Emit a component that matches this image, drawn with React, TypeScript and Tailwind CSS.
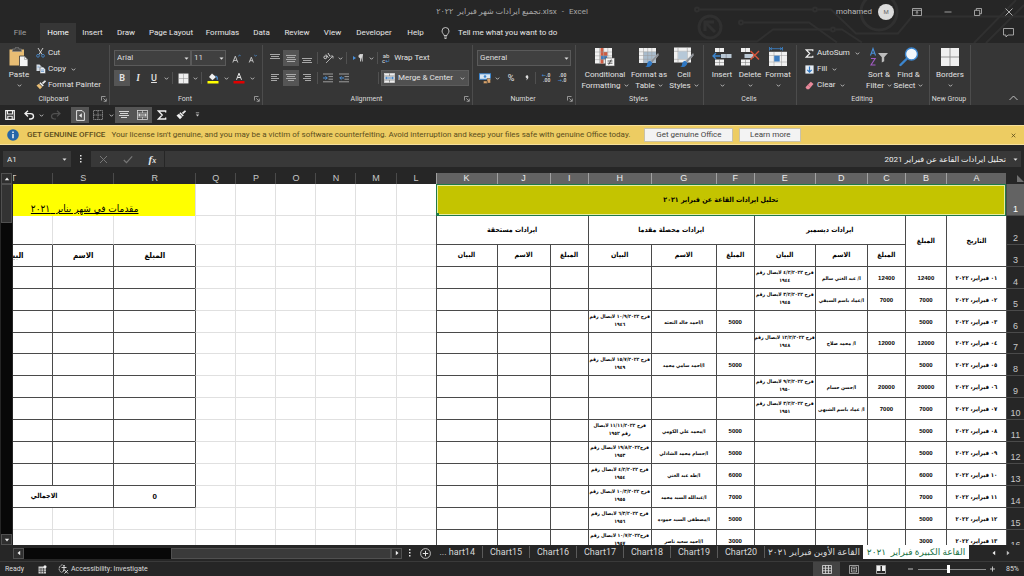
import React from "react";

type Kids = { children?: React.ReactNode };

const Ic = ({ w = 12, h = 12, vb, children }: Kids & { w?: number; h?: number; vb?: string }) => (
  <svg width={w} height={h} viewBox={vb ?? `0 0 ${w} ${h}`} fill="none" className="shrink-0" aria-hidden="true">
    {children}
  </svg>
);

const Chev = () => (
  <Ic w={5} h={5}>
    <path d="M0.8 1.6 2.5 3.3 4.2 1.6" stroke="#c8c8c8" strokeWidth="0.9" />
  </Ic>
);

const Tri = () => (
  <Ic w={5} h={5}>
    <path d="M0.5 1.4h4L2.5 3.8z" fill="#e0e0e0" />
  </Ic>
);

const Launcher = () => (
  <Ic w={6} h={6}>
    <path d="M0.5 4.5v-4h4M2.3 2.3l2.8 2.8M5.3 2.6v2.7H2.6" stroke="#bdbdbd" strokeWidth="0.7" />
  </Ic>
);

function Group({ label, className, launcher, children }: Kids & { label: string; className: string; launcher?: boolean }) {
  return (
    <section aria-label={label} className={`flex shrink-0 flex-col border-r border-[#4c4c4c] ${className}`}>
      <div className="flex h-12 items-start">{children}</div>
      <div className="flex h-3 items-center justify-center pr-[2px]">
        <span className="flex-1" />
        <span className="text-[7px] text-[#dcdcdc]">{label}</span>
        <span className="flex flex-1 justify-end">
          {launcher && (
            <button aria-label={`${label} settings`}>
              <Launcher />
            </button>
          )}
        </span>
      </div>
    </section>
  );
}

function Big({ icon, lines, className }: { icon: React.ReactNode; lines: string[]; className: string }) {
  return (
    <button className={`flex shrink-0 flex-col items-center text-[8px] leading-[11px] whitespace-nowrap ${className}`}>
      <span className="flex h-6 items-center">{icon}</span>
      <span>{lines[0]}</span>
      <span className="flex h-[11px] items-center gap-[3px]">
        {lines[1]}
        <Chev />
      </span>
    </button>
  );
}

function Small({ icon, label, chev }: { icon: React.ReactNode; label: string; chev?: boolean }) {
  return (
    <button className="flex h-4 items-center gap-[3px] text-[8px] whitespace-nowrap">
      <span className="flex w-[9px] justify-center">{icon}</span>
      {label}
      {chev && (
        <span className="pl-[2px]">
          <Chev />
        </span>
      )}
    </button>
  );
}

function Tool({ label, className = "w-4", on, children }: Kids & { label: string; className?: string; on?: boolean }) {
  return (
    <button
      aria-label={label}
      className={`flex h-4 shrink-0 items-center justify-center ${on ? "bg-[#555555]" : ""} ${className}`}
    >
      {children}
    </button>
  );
}

const Bar = () => <span className="mx-[2px] h-3 w-px shrink-0 bg-[#505050]" />;

function Combo({ label, value, className }: { label: string; value: string; className: string }) {
  return (
    <span className={`relative flex h-4 items-center ${className}`}>
      <select
        aria-label={label}
        defaultValue={value}
        className="h-full w-full appearance-none border border-[#5a5a5a] bg-[#404040] pl-[2px] text-[8px] text-[#dedede]"
      >
        <option>{value}</option>
      </select>
      <span className="pointer-events-none absolute right-[2px]">
        <Tri />
      </span>
    </span>
  );
}

const Lines = ({ rows, color = "#b5b5b5" }: { rows: [number, number, number][]; color?: string }) => (
  <Ic w={10} h={10}>
    {rows.map(([x, y, w]) => (
      <rect key={y} x={x} y={y} width={w} height="0.9" fill={color} />
    ))}
  </Ic>
);

const Brush = () => (
  <>
    <path d="M20 6.5 12.5 14l1.8 1.8 6.2-7.6z" fill="#8a8f96" stroke="#c9ccd0" strokeWidth="0.4" />
    <path d="M12.2 13.8c-2.4.2-3 2.2-3.2 4-.1 1-.9 1.6-1.8 1.7 3 1.2 6.700.4 7.200-3.700z" fill="#2f78c4" />
  </>
);

const PasteIcon = () => (
  <Ic w={20} h={20}>
    <rect x="0.5" y="2.500" width="14.500" height="16" fill="#e8bd74" />
    <path d="M3.500 4.500v-2.500h2.500a2 2 0 0 1 4 0h2.500v2.500z" fill="#4a4a4a" stroke="#8d8d8d" strokeWidth="0.6" />
    <path d="M10.500 9h5l3.500 3.500v7h-8.500z" fill="#f4f4f4" stroke="#363636" strokeWidth="0.8" />
    <path d="M15.500 9v3.500h3.500" stroke="#8f8f8f" strokeWidth="0.6" />
  </Ic>
);

const CondIcon = () => (
  <Ic w={22} h={20}>
    <rect x="1" y="1" width="17" height="15.500" fill="#f0f0f0" />
    <rect x="6.500" y="1" width="3" height="15.500" fill="#cf5b41" />
    <rect x="9.500" y="5" width="4" height="4" fill="#cf5b41" />
    <rect x="7" y="8.800" width="6" height="3.500" fill="#3f7dc0" />
    <path d="M1 5h17M1 8.800h17M1 12.600h17M5.500 1v15.500M9.700 1v15.500M13.800 1v15.500" stroke="#9a9a9a" strokeWidth="0.5" />
    <rect x="11.500" y="11" width="9" height="8" fill="#f7f7f7" stroke="#555" strokeWidth="0.6" />
    <path d="M13.500 14h5M13.500 16.200h5M17.300 12.500l-2.600 5.200" stroke="#333" strokeWidth="0.8" />
  </Ic>
);

const TableIcon = () => (
  <Ic w={22} h={20}>
    <rect x="1" y="1" width="17" height="15" fill="#f0f0f0" />
    <rect x="5.500" y="4.800" width="12.500" height="11.200" fill="#a9bccd" />
    <path d="M1 4.800h17M1 8.500h17M1 12.300h17M5.500 1v15M9.700 1v15M13.800 1v15" stroke="#9a9a9a" strokeWidth="0.5" />
    <Brush />
  </Ic>
);

const StylesIcon = () => (
  <Ic w={22} h={20}>
    <rect x="1" y="0.500" width="17" height="15" fill="#f0f0f0" />
    <path d="M1 4.300h17M1 12.300h17M5 .5v15M14.300 .5v15" stroke="#8d8d8d" strokeWidth="0.5" />
    <rect x="5.200" y="4.500" width="9" height="7.500" fill="#b6c8d8" />
    <Brush />
  </Ic>
);

const InsertIcon = () => (
  <Ic w={20} h={20}>
    <path d="M3 1h9v4H3zM3 12.500h9v6H3z" fill="#f0f0f0" />
    <path d="M7.500 1v4M7.500 12.500v6M3 15.500h9" stroke="#777" strokeWidth="0.5" />
    <rect x="9" y="7" width="10.500" height="4" fill="#b9c7d3" />
    <path d="M14.200 7v4" stroke="#667" strokeWidth="0.5" />
    <path d="M8.500 9h-7.500M4 6 1 9l3 3" stroke="#3c86cf" strokeWidth="1.300" />
  </Ic>
);

const DeleteIcon = () => (
  <Ic w={20} h={20}>
    <path d="M1 1h9v4H1zM1 12.500h9v6H1z" fill="#f0f0f0" />
    <path d="M5.500 1v4M5.500 12.500v6M1 15.500h9" stroke="#777" strokeWidth="0.5" />
    <rect x="4.500" y="7" width="9" height="4" fill="#b9c7d3" />
    <path d="m10.500 4 8.500 8.500M19 4l-8.500 8.500" stroke="#d9543a" strokeWidth="1.400" />
  </Ic>
);

const FormatIcon = () => (
  <Ic w={20} h={20}>
    <path d="M1.500 0v3.500M14.500 0v3.500M2 1.700h12M4 .5 2.300 1.700 4 3M12 .5l1.700 1.200L12 3" stroke="#3c86cf" strokeWidth="0.8" />
    <rect x="1" y="4.800" width="18" height="14.200" fill="#f0f0f0" />
    <path d="M1 8.500h18M1 15h18M6 4.800v14.200M13.500 4.800v14.200" stroke="#999" strokeWidth="0.5" />
    <rect x="6.200" y="8.700" width="5.500" height="5.800" fill="#3c7dc2" />
  </Ic>
);

const SortIcon = () => (
  <Ic w={20} h={20}>
    <path d="M1.500 8.500 4 1.500l2.500 7M2.400 6.200h3.300" stroke="#4a90d9" strokeWidth="1.100" />
    <path d="M2 11.500h4.200l-4.200 6.500h4.500" stroke="#a25bc4" strokeWidth="1.100" />
    <path d="M9 6h10l-3.800 4.200v4l-2.400 1.300v-5.300z" fill="#bdbdbd" />
  </Ic>
);

const FindIcon = () => (
  <Ic w={20} h={20}>
    <path d="m7.500 12-6 6" stroke="#3c86cf" strokeWidth="2.400" strokeLinecap="round" />
    <circle cx="12.500" cy="7" r="6" fill="#f2f6fa" stroke="#3c86cf" strokeWidth="1.400" />
  </Ic>
);

const BordersIcon = ({ s = 20 }: { s?: number }) => (
  <Ic w={s} h={s} vb="0 0 20 20">
    <rect x="1" y="1" width="18" height="18" fill="#efefef" />
    <path d="M10 1v18M1 10h18" stroke="#8a8a8a" strokeWidth="0.9" />
  </Ic>
);

const BrushSmall = ({ gold }: { gold?: boolean }) => (
  <Ic w={10} h={10}>
    <path d="M9.500.8 6.500 3.500" stroke="#e8e8e8" strokeWidth="1.700" />
    <path d="m4.500 2.200 3.300 3.300-1.200 1-3.300-3.200z" fill="#f0f0f0" />
    <path d="M3 3.800 6.200 7 4 9.300.5 5.500z" fill={gold ? "#e8bd74" : "#f0f0f0"} />
  </Ic>
);

const Sigma = ({ s = 9 }: { s?: number }) => (
  <Ic w={s} h={s} vb="0 0 9 9">
    <path d="M7.800 2.200V.9H1.300L4.700 4.500 1.300 8.100h6.500V6.800" stroke="#f0f0f0" strokeWidth="1.200" />
  </Ic>
);

const Indent = ({ flip }: { flip?: boolean }) => (
  <Ic w={10} h={10}>
    <path d="M0 1h10M5.500 3.600H10M5.500 6.200H10M0 8.800h10" stroke="#a9a9a9" strokeWidth="0.9" />
    <path d={flip ? "M5 5H.8M2.500 3.300.8 5l1.700 1.700" : "M0 5h4.200M2.500 3.300 4.200 5 2.500 6.700"} stroke="#4a90d9" strokeWidth="1" />
  </Ic>
);

const MergeIcon = ({ mono }: { mono?: boolean }) => (
  <Ic w={11} h={10}>
    <rect x="0.500" y="0.500" width="10" height="9" fill={mono ? "#4f4f4f" : "#ececec"} stroke="#d5d5d5" strokeWidth="0.8" />
    <path d="M.5 3h10M.5 7h10M5.500.5V3M5.500 7v2.500" stroke={mono ? "#d5d5d5" : "#777"} strokeWidth="0.7" />
    <path d="M1.500 5h8M3 3.900 1.700 5 3 6.100M8 3.900 9.300 5 8 6.100" stroke={mono ? "#f0f0f0" : "#2f78c4"} strokeWidth="0.9" />
  </Ic>
);

function DecIcon({ out }: { out?: boolean }) {
  return (
    <span className="flex flex-col items-end text-[5px] leading-[5px] font-bold text-[#cfcfcf]">
      <span>
        {!out && <span className="text-[#4a90d9]">←</span>}
        {out ? ".00" : ".0"}
      </span>
      <span>
        {out && <span className="text-[#4a90d9]">→</span>}
        {out ? ".0" : ".00"}
      </span>
    </span>
  );
}

function TitleBar() {
  return (
    <header className="flex h-[23px] shrink-0 items-center">
      <div className="flex flex-1" />
      <h1 className="flex gap-[5px] text-[8px] whitespace-pre text-[#a8a8a8]">
        <bdi dir="ltr">تجميع ايرادات شهر فبراير  ٢٠٢٢.xlsx</bdi>
        <span>-</span>
        <span>Excel</span>
      </h1>
      <div className="flex flex-1 items-center justify-end">
        <span className="text-[8px] text-[#b8b8b8]">mohamed</span>
        <span className="mr-2 ml-[6px] flex size-4 items-center justify-center rounded-full bg-[#dcdcdc] text-[6px] text-[#666]">M</span>
        <button aria-label="Ribbon display options" className="flex w-[30px] justify-center">
          <Ic w={10} h={8}>
            <path d="M.5.5h9v7h-9zM.5 2.300h9M5 6.500V3.500M3.700 4.700 5 3.500l1.300 1.200" stroke="#bdbdbd" strokeWidth="0.8" />
          </Ic>
        </button>
        <button aria-label="Minimize" className="flex w-[31px] justify-center">
          <Ic w={8} h={8}>
            <path d="M.5 4h7" stroke="#bdbdbd" strokeWidth="0.8" />
          </Ic>
        </button>
        <button aria-label="Restore" className="flex w-[30px] justify-center">
          <Ic w={8} h={8}>
            <path d="M.5 2.300h5.200v5.200H.5zM2.300 2.300V.5h5.200v5.200H5.700" stroke="#bdbdbd" strokeWidth="0.8" />
          </Ic>
        </button>
        <button aria-label="Close" className="flex w-[31px] justify-center">
          <Ic w={8} h={8}>
            <path d="m.5.5 7 7M7.500.5l-7 7" stroke="#d0d0d0" strokeWidth="0.8" />
          </Ic>
        </button>
      </div>
    </header>
  );
}

const MENU: [string, string][] = [
  ["File", "w-[40px]"],
  ["Home", "w-[36px]"],
  ["Insert", "w-[33px]"],
  ["Draw", "w-[34px]"],
  ["Page Layout", "w-[56px]"],
  ["Formulas", "w-[47px]"],
  ["Data", "w-[31px]"],
  ["Review", "w-[40px]"],
  ["View", "w-[31px]"],
  ["Developer", "w-[52px]"],
  ["Help", "w-[31px]"],
];

function MenuTabs() {
  return (
    <nav className="flex h-5 shrink-0 items-stretch text-[8px]">
      {MENU.map(([name, w]) => (
        <button
          key={name}
          className={`${w} ${name === "Home" ? "bg-[#363636] text-white" : name === "File" ? "text-[#a0a0a0]" : "text-[#e6e6e6]"}`}
        >
          {name}
        </button>
      ))}
      <button className="ml-[10px] flex items-center gap-2 text-[#e6e6e6]">
        <Ic w={9} h={12}>
          <path d="M3 8.500C3 7 1 6.300 1 4a3.500 3.500 0 0 1 7 0c0 2.300-2 3-2 4.500zM3 10h3M3.500 11.500h2" stroke="#e6e6e6" strokeWidth="0.8" />
        </Ic>
        Tell me what you want to do
      </button>
      <span className="flex-1" />
      <button aria-label="Comments" className="mr-[10px]">
        <Ic w={11} h={10}>
          <path d="M.5.5h10v6.500H5L3 9V7H.5z" stroke="#c0c0c0" strokeWidth="0.8" />
        </Ic>
      </button>
    </nav>
  );
}

function Ribbon() {
  return (
    <div className="flex h-[62px] shrink-0 bg-[#363636] pt-[2px] text-[#e2e2e2]">
      <Group label="Clipboard" launcher className="w-[110px]">
        <Big className="ml-1 w-[30px]" icon={<PasteIcon />} lines={["Paste", ""]} />
        <div className="ml-[2px] flex flex-col">
          <Small
            label="Cut"
            icon={
              <Ic w={9} h={10}>
                <path d="m2 0 4 6.500M7 0 3 6.500" stroke="#e0e0e0" strokeWidth="0.9" />
                <circle cx="2" cy="7.800" r="1.400" stroke="#4a90d9" strokeWidth="0.8" />
                <circle cx="7" cy="7.800" r="1.400" stroke="#4a90d9" strokeWidth="0.8" />
              </Ic>
            }
          />
          <Small
            label="Copy"
            chev
            icon={
              <Ic w={10} h={10}>
                <path d="M.5.5h3l2 2v4.500h-5z" fill="#d5dde5" />
                <path d="M4 3h3.200l2.300 2.300V9.500H4z" fill="#e6ecf2" stroke="#363636" strokeWidth="0.500" />
                <path d="M5 6h3M5 7.500h3M1.500 3h2" stroke="#3c7dc2" strokeWidth="0.600" />
              </Ic>
            }
          />
          <Small label="Format Painter" icon={<BrushSmall gold />} />
        </div>
      </Group>

      <Group label="Font" launcher className="w-[153px]">
        <div className="flex flex-col gap-1 pt-[5px] pl-1">
          <div className="flex items-center">
            <Combo label="Font name" value="Arial" className="w-[77px]" />
            <Combo label="Font size" value="11" className="w-[35px]" />
            <Tool label="Increase font size" className="ml-[2px] w-4">
              <Ic w={9} h={9}>
                <path d="M.8 8.500 3.300 2.200l2.500 6.300M1.700 6.400h3.200" stroke="#d0d0d0" strokeWidth="0.900" />
                <path d="M6.300 2.200 7.500 1l1.200 1.200" stroke="#4a90d9" strokeWidth="0.800" />
              </Ic>
            </Tool>
            <Tool label="Decrease font size">
              <Ic w={9} h={9}>
                <path d="M1.200 8.500 3.300 3.200l2.100 5.300M2 6.700h2.600" stroke="#d0d0d0" strokeWidth="0.900" />
                <path d="M6.300 1 7.500 2.200 8.700 1" stroke="#4a90d9" strokeWidth="0.800" />
              </Ic>
            </Tool>
          </div>
          <div className="flex items-center text-[9px]">
            <Tool label="Bold" on>
              <b>B</b>
            </Tool>
            <Tool label="Italic">
              <i className="font-serif font-bold">I</i>
            </Tool>
            <Tool label="Underline">
              <u className="font-medium">U</u>
            </Tool>
            <Tool label="Underline options" className="w-2">
              <Chev />
            </Tool>
            <Bar />
            <Tool label="Borders">
              <BordersIcon s={11} />
            </Tool>
            <Tool label="Border options" className="w-2">
              <Chev />
            </Tool>
            <Bar />
            <Tool label="Fill color" className="w-[18px]">
              <Ic w={12} h={12}>
                <path d="m5 1.500 4 3.500-3.500 3.300-3.500-3.300z" fill="#f0f0f0" />
                <path d="M8.500 4.200c1.500.3 2 1.800 1.800 3.500" stroke="#4a90d9" strokeWidth="1.200" />
                <rect x="0.500" y="9" width="11" height="2.500" fill="#ffff00" />
              </Ic>
            </Tool>
            <Tool label="Fill options" className="w-2">
              <Chev />
            </Tool>
            <Tool label="Font color" className="w-[18px]">
              <Ic w={12} h={12}>
                <path d="M3.500 7.800 6 1.200l2.500 6.600M4.400 5.500h3.200" stroke="#e6e6e6" strokeWidth="1" />
                <rect x="0.500" y="9" width="11" height="2.500" fill="#e00000" />
              </Ic>
            </Tool>
            <Tool label="Font color options" className="w-2">
              <Chev />
            </Tool>
          </div>
        </div>
      </Group>

      <Group label="Alignment" launcher className="w-[210px]">
        <div className="flex flex-col gap-1 pt-[5px] pl-1">
          <div className="flex items-center">
            <Tool label="Top align">
              <Lines rows={[[0, 1, 10], [1, 3, 8], [0, 5, 10]]} />
            </Tool>
            <Tool label="Middle align" on>
              <Lines rows={[[0, 2, 10], [1, 4, 8], [0, 6, 10], [1, 8, 8]]} />
            </Tool>
            <Tool label="Bottom align">
              <Lines rows={[[0, 5, 10], [1, 7, 8], [0, 9, 10]]} />
            </Tool>
            <Bar />
            <Tool label="Orientation">
              <Ic w={11} h={11}>
                <path d="M3 10 10 3M10 5.500V3H7.500" stroke="#bdbdbd" strokeWidth="0.900" />
                <circle cx="2.300" cy="4.300" r="1.400" stroke="#e0e0e0" strokeWidth="0.900" />
                <path d="m3 1.500 2.500 3.200M5 0l2 3.500" stroke="#e0e0e0" strokeWidth="0.900" />
              </Ic>
            </Tool>
            <Tool label="Orientation options" className="w-2">
              <Chev />
            </Tool>
            <Bar />
            <Tool label="Text direction" className="w-[18px]">
              <Ic w={12} h={10}>
                <path d="m1 3 3 2-3 2z" fill="#4a90d9" />
                <path d="M8.500 8.500V1.500H11M10.300 8.500V1.500M8.500 1.500a1.700 1.700 0 0 0 0 3.400z" stroke="#d5d5d5" strokeWidth="0.800" fill="#d5d5d5" />
              </Ic>
            </Tool>
            <Tool label="Text direction options" className="w-2">
              <Chev />
            </Tool>
            <Bar />
            <button className="flex h-4 items-center gap-1 pl-[2px] text-[8px]">
              <span className="text-[6px] leading-[5px] text-[#e0e0e0]">
                ab
                <br />c<span className="text-[#4a90d9]">↵</span>
              </span>
              Wrap Text
            </button>
          </div>
          <div className="flex items-center">
            <Tool label="Align left">
              <Lines rows={[[1, 1, 8], [1, 3, 6], [1, 5, 8], [1, 7, 6]]} />
            </Tool>
            <Tool label="Center" on>
              <Lines rows={[[0, 1, 10], [1, 3, 8], [0, 5, 10], [2, 7, 6]]} />
            </Tool>
            <Tool label="Align right">
              <Lines rows={[[1, 1, 8], [3, 3, 6], [1, 5, 8], [3, 7, 6]]} />
            </Tool>
            <Bar />
            <Tool label="Increase indent">
              <Indent />
            </Tool>
            <Tool label="Decrease indent">
              <Indent flip />
            </Tool>
            <span className="w-6 shrink-0" />
            <Bar />
            <button className="flex h-4 w-[88px] items-center gap-[3px] border border-[#5c5c5c] bg-[#505050] pl-[2px] text-[8px] whitespace-nowrap">
              <MergeIcon />
              <span className="flex-1 text-left">Merge &amp; Center</span>
              <span className="pr-[3px]">
                <Chev />
              </span>
            </button>
          </div>
        </div>
      </Group>

      <Group label="Number" launcher className="w-[103px]">
        <div className="flex flex-1 flex-col gap-1 px-1 pt-[5px]">
          <Combo label="Number format" value="General" className="w-full" />
          <div className="flex items-center">
            <Tool label="Accounting format">
              <Ic w={12} h={11}>
                <rect x="0.500" y="0.800" width="11" height="5.500" fill="#d9e6f2" stroke="#3c86cf" />
                <circle cx="6" cy="3.500" r="1.300" fill="#3c86cf" />
                <path d="M4.500 8h4v2.500h-4zM8 5.500h3.500V10H8z" fill="#d8a26a" stroke="#363636" strokeWidth="0.400" />
              </Ic>
            </Tool>
            <Tool label="Accounting options" className="w-2">
              <Chev />
            </Tool>
            <Tool label="Percent" className="w-5">
              <span className="text-[9px]">%</span>
            </Tool>
            <Tool label="Comma" className="w-3">
              <Ic w={4} h={6}>
                <path d="M2.800.5c1.200 1.500.6 3.500-1.800 5 .7-1 .9-1.700.8-2.300C.4 3 .2.8 1.500.4c.500-.1 1-.1 1.300.1z" fill="#e0e0e0" />
              </Ic>
            </Tool>
            <Bar />
            <Tool label="Increase decimal">
              <DecIcon />
            </Tool>
            <Tool label="Decrease decimal">
              <DecIcon out />
            </Tool>
          </div>
        </div>
      </Group>

      <Group label="Styles" className="w-[128px]">
        <Big className="ml-[5px] w-[48px]" icon={<CondIcon />} lines={["Conditional", "Formatting"]} />
        <Big className="w-[40px]" icon={<TableIcon />} lines={["Format as", "Table"]} />
        <Big className="w-[30px]" icon={<StylesIcon />} lines={["Cell", "Styles"]} />
      </Group>

      <Group label="Cells" className="w-[93px]">
        <Big className="ml-1 w-[28px]" icon={<InsertIcon />} lines={["Insert", ""]} />
        <Big className="w-[28px]" icon={<DeleteIcon />} lines={["Delete", ""]} />
        <Big className="w-[28px]" icon={<FormatIcon />} lines={["Format", ""]} />
      </Group>

      <Group label="Editing" className="w-[133px]">
        <div className="ml-2 flex w-[60px] flex-col">
          <Small label="AutoSum" chev icon={<Sigma />} />
          <Small
            label="Fill"
            chev
            icon={
              <Ic w={9} h={9}>
                <rect x="0.400" y="0.400" width="8.200" height="8.200" fill="#e6edf4" />
                <path d="M4.500 1.500v5.500M2.300 4.900 4.500 7.200l2.200-2.300" stroke="#2f78c4" strokeWidth="1.200" />
              </Ic>
            }
          />
          <Small
            label="Clear"
            chev
            icon={
              <Ic w={9} h={9}>
                <path d="M5.800.8 8.500 3 4 8.200H1.800L.5 6.300z" fill="#e88a9c" />
                <path d="m2.800 3.800 2.900 2.600" stroke="#b85568" strokeWidth="0.600" />
              </Ic>
            }
          />
        </div>
        <Big className="w-[28px]" icon={<SortIcon />} lines={["Sort &", "Filter"]} />
        <Big className="w-[31px]" icon={<FindIcon />} lines={["Find &", "Select"]} />
      </Group>

      <Group label="New Group" className="w-[41px]">
        <Big className="w-[40px]" icon={<BordersIcon />} lines={["Borders", ""]} />
      </Group>

      <div className="flex flex-1 items-end justify-end pr-[6px] pb-1">
        <button aria-label="Collapse ribbon">
          <Ic w={9} h={6}>
            <path d="M.5 5 4.500 1l4 4" stroke="#d0d0d0" strokeWidth="0.900" />
          </Ic>
        </button>
      </div>
    </div>
  );
}

function QuickAccess() {
  return (
    <div className="flex h-5 shrink-0 items-center pl-[2px]">
      <Tool label="Save">
        <Ic w={10} h={10}>
          <path d="M.7.700h8.600v8.600H.7z" stroke="#f0f0f0" strokeWidth="1.200" />
          <path d="M2.500 1v3h5V1M2.800 9.300V6.300h4.400v3" stroke="#f0f0f0" strokeWidth="1.100" />
        </Ic>
      </Tool>
      <Tool label="Undo" className="ml-[3px] w-4">
        <Ic w={11} h={10}>
          <path d="M4 .8 1 3.600l3 2.800M1.200 3.600h5.300a3 2.700 0 0 1 0 5.400H5" stroke="#f0f0f0" strokeWidth="1.400" />
        </Ic>
      </Tool>
      <Tool label="Undo options" className="w-2">
        <Chev />
      </Tool>
      <Tool label="Redo" className="w-5">
        <Ic w={11} h={10}>
          <path d="M7 .8l3 2.800-3 2.800M9.800 3.600H4.500a3 2.700 0 0 0 0 5.400H6" stroke="#505050" strokeWidth="1.200" />
        </Ic>
      </Tool>
      <Tool label="Sheet right to left" on className="ml-[6px] w-[18px]">
        <Ic w={9} h={11}>
          <path d="M.6.600h5.500l2.300 2.300v7.500H.6z" stroke="#f0f0f0" strokeWidth="0.900" />
          <path d="M5.800 3.200v4.600L3 5.500z" fill="#f0f0f0" />
        </Ic>
      </Tool>
      <Tool label="Borders" className="w-[18px]">
        <Ic w={10} h={10}>
          <path d="M.5.500h9v9h-9zM5 .5v9M.5 5h9" stroke="#a0a0a0" strokeWidth="0.800" strokeDasharray="1.400 0.600" />
        </Ic>
      </Tool>
      <Tool label="Border options" className="w-2">
        <Chev />
      </Tool>
      <Tool label="Center" on className="w-[18px]">
        <Lines color="#e6e6e6" rows={[[0, 1, 10], [1, 3, 8], [0, 5, 10], [2, 7, 6]]} />
      </Tool>
      <Tool label="Merge and center" on className="w-[19px]">
        <MergeIcon mono />
      </Tool>
      <Tool label="AutoSum" className="w-5">
        <Sigma s={10} />
      </Tool>
      <Tool label="Format painter" className="w-[18px]">
        <BrushSmall />
      </Tool>
      <Tool label="Customize" className="w-[14px]">
        <Ic w={5} h={6}>
          <path d="M.8.800h3.400" stroke="#d0d0d0" strokeWidth="0.700" />
          <path d="M.8 2.600h3.400L2.500 4.600z" fill="#d0d0d0" />
        </Ic>
      </Tool>
    </div>
  );
}

function LicenseBar() {
  return (
    <div role="alert" className="flex h-5 shrink-0 items-center border-y border-[#f7e09a] bg-[#edcc62] pl-[7px] text-[8px] whitespace-nowrap text-[#5a4c1c]">
      <Ic w={12} h={12}>
        <circle cx="6" cy="6" r="5.800" fill="#2566a8" />
        <path d="M6 5v4.200M6 2.600v1.300" stroke="#fff" strokeWidth="1.400" />
      </Ic>
      <span className="ml-2 font-medium">GET GENUINE OFFICE</span>
      <span className="ml-[6px]">
        Your license isn't genuine, and you may be a victim of software counterfeiting. Avoid interruption and keep your files safe with genuine Office today.
      </span>
      <button className="ml-[14px] h-[14px] w-[89px] border border-[#c9c2aa] bg-[#f3f3f3] text-[#444]">Get genuine Office</button>
      <button className="ml-[6px] h-[14px] w-[62px] border border-[#c9c2aa] bg-[#f3f3f3] text-[#444]">Learn more</button>
      <span className="flex-1" />
      <button aria-label="Dismiss" className="mr-2">
        <Ic w={5} h={5}>
          <path d="m.7.700 3.600 3.600M4.300.700.7 4.300" stroke="#5a4c1c" strokeWidth="0.800" />
        </Ic>
      </button>
    </div>
  );
}

function FormulaBar() {
  return (
    <div className="mt-[6px] mb-[6px] flex h-4 shrink-0 items-stretch px-[3px]">
      <div className="flex w-[68px] items-center bg-[#383838] pr-1">
        <input aria-label="Name box" defaultValue="A1" className="w-0 flex-1 bg-transparent pl-1 text-[8px] text-[#e6e6e6]" />
        <Tri />
      </div>
      <div className="flex w-[20px] items-center justify-center">
        <Ic w={2} h={8}>
          <path d="M0 0h1.500v1.500H0zM0 3h1.500v1.500H0zM0 6h1.500v1.500H0z" fill="#e6e6e6" />
        </Ic>
      </div>
      <div className="flex w-[73px] items-center justify-around bg-[#383838]">
        <button aria-label="Cancel">
          <Ic w={9} h={9}>
            <path d="m1 1 7 7M8 1 1 8" stroke="#777" strokeWidth="1" />
          </Ic>
        </button>
        <button aria-label="Enter">
          <Ic w={10} h={9}>
            <path d="m.8 5 2.700 2.700L9.200 1.300" stroke="#777" strokeWidth="1.200" />
          </Ic>
        </button>
        <button aria-label="Insert function" className="font-['Liberation_Serif',serif] text-[11px] leading-none font-bold text-[#e6e6e6] italic">
          f<span className="text-[8px]">x</span>
        </button>
      </div>
      <div className="ml-px flex flex-1 items-center bg-[#383838] pr-[3px]">
        <input
          aria-label="Formula"
          dir="rtl"
          defaultValue="تحليل ايرادات القاعة عن فبراير 2021"
          className="min-w-0 flex-1 bg-transparent pr-[7px] text-[8px] text-[#f0f0f0]"
        />
        <Tri />
      </div>
    </div>
  );
}

const COLS: [string, string][] = [
  ["A", "w-[60px]"],
  ["B", "w-[41px]"],
  ["C", "w-[38px]"],
  ["D", "w-[52px]"],
  ["E", "w-[61px]"],
  ["F", "w-[38px]"],
  ["G", "w-[65px]"],
  ["H", "w-[63px]"],
  ["I", "w-[38px]"],
  ["J", "w-[53px]"],
  ["K", "w-[61px]"],
  ["L", "w-[40px]"],
  ["M", "w-[40px]"],
  ["N", "w-[40px]"],
  ["O", "w-[40px]"],
  ["P", "w-[40px]"],
  ["Q", "w-[40px]"],
  ["R", "w-[82px]"],
  ["S", "w-[61px]"],
  ["T", "w-[78px]"],
];

type Entry = { row: number; date: string; amount: string; kind: "dec" | "adv"; name: string; note: string };

const ENTRIES: Entry[] = [
  { row: 4, date: "٠١ فبراير، ٢٠٢٢", amount: "12400", kind: "dec", name: "ا/ عبد الغني سالم", note: "فرح ٤/٢/٢٠٢٢ لايصال رقم\n١٩٤٤" },
  { row: 5, date: "٠٢ فبراير، ٢٠٢٢", amount: "7000", kind: "dec", name: "ا/عماد باسم السيفي", note: "فرح ٣/٢/٢٠٢٢ لايصال رقم\n١٩٤٥" },
  { row: 6, date: "٠٣ فبراير، ٢٠٢٢", amount: "5000", kind: "adv", name: "ا/احمد خالد النحته", note: "فرح ١٠/٩/٢٠٢٢ لايصال رقم\n١٩٤٦" },
  { row: 7, date: "٠٤ فبراير، ٢٠٢٢", amount: "12000", kind: "dec", name: "ا/ محمد صلاح", note: "فرح ١٢/٢/٢٠٢٢ لايصال رقم\n١٩٤٨" },
  { row: 8, date: "٠٥ فبراير، ٢٠٢٢", amount: "5000", kind: "adv", name: "ا/احمد سامي محمد", note: "فرح ١٥/٧/٢٠٢٢ لايصال رقم\n١٩٤٩" },
  { row: 9, date: "٠٦ فبراير، ٢٠٢٢", amount: "20000", kind: "dec", name: "ا/حسن حسام", note: "فرح ٩/٢/٢٠٢٢ لايصال رقم\n١٩٥٠" },
  { row: 10, date: "٠٧ فبراير، ٢٠٢٢", amount: "7000", kind: "dec", name: "ا/ عماد باسم الشيهى", note: "فرح ٣/٢/٢٠٢٢ لايصال رقم\n١٩٥١" },
  { row: 11, date: "٠٨ فبراير، ٢٠٢٢", amount: "5000", kind: "adv", name: "ا/محمد علي الكومي", note: "فرح ١١/١١/٢٠٢٢ لايصال\nرقم ١٩٥٢" },
  { row: 12, date: "٠٩ فبراير، ٢٠٢٢", amount: "5000", kind: "adv", name: "ا/حسام محمد الشاذلي", note: "فرح١٩/٨/٢٠٢٢ لايصال رقم\n١٩٥٣" },
  { row: 13, date: "١٠ فبراير، ٢٠٢٢", amount: "6000", kind: "adv", name: "ا/طه عبد الغني", note: "فرح ٤/٢/٢٠٢٢ لايصال رقم\n١٩٥٤" },
  { row: 14, date: "١١ فبراير، ٢٠٢٢", amount: "7000", kind: "adv", name: "ا/عبدالله السيد محمد", note: "فرح ١٠/٣/٢٠٢٢ لايصال رقم\n١٩٥٥" },
  { row: 15, date: "١٢ فبراير، ٢٠٢٢", amount: "5000", kind: "adv", name: "ا/مصطفى السيد حموده", note: "فرح ٦/٣/٢٠٢٢ لايصال رقم\n١٩٥٦" },
  { row: 16, date: "١٣ فبراير، ٢٠٢٢", amount: "3000", kind: "adv", name: "ا/احمد سعيد ناصر", note: "فرح١٠/٧/٢٠٢٢ لايصال رقم\n١٩٥٧" },
];

const BOX = "border-b border-l border-[#4a4a4a] bg-white p-0";
const PLAIN = "border-b border-l border-[#e0e0e0] bg-white p-0";
const HEAD = "text-[7px] font-bold";
const TINY = "text-[5px] leading-[8px] font-bold whitespace-pre";
const NOTE = "pb-1 text-[5px] leading-[8px] font-bold whitespace-pre";
const NUM = "font-['Liberation_Sans',sans-serif] text-[6px] font-bold";

function RowNo({ n, on }: { n: number; on?: boolean }) {
  return (
    <th
      scope="row"
      className={`border-b border-l border-[#4a4a4a] p-0 align-bottom font-['Liberation_Sans',sans-serif] text-[9px] leading-[11px] font-normal ${on ? "bg-[#636363] text-white" : "bg-[#262626] text-[#c8c8c8]"}`}
    >
      {n}
    </th>
  );
}

const Blank = ({ n, cls = PLAIN }: { n: number; cls?: string }) => (
  <>
    {Array.from({ length: n }, (_, i) => (
      <td key={i} className={cls} />
    ))}
  </>
);

function Sheet() {
  return (
    <div dir="rtl" className="min-w-0 flex-1 overflow-hidden bg-white">
      <table className="w-[1050px] table-fixed border-separate border-spacing-0 text-center font-['DejaVu_Sans_Condensed','DejaVu_Sans',sans-serif] text-black">
        <colgroup>
          <col className="w-[18px]" />
          {COLS.map(([c, w]) => (
            <col key={c} className={w} />
          ))}
        </colgroup>
        <thead>
          <tr className="h-[11px] font-['Liberation_Sans',sans-serif] text-[9px] leading-[11px]">
            <th aria-label="Select all" className="bg-[#262626] p-0">
              <Ic w={9} h={9}>
                <path d="M2 1v7h7z" fill="#707070" />
              </Ic>
            </th>
            {COLS.map(([c], i) => (
              <th
                key={c}
                scope="col"
                className={`border-l p-0 font-normal ${i < 11 ? "border-[#a0a0a0] bg-[#636363] text-[#ececec]" : "border-[#4a4a4a] bg-[#262626] text-[#c8c8c8]"}`}
              >
                {c}
              </th>
            ))}
          </tr>
        </thead>
        <tbody>
          <tr className="h-8">
            <RowNo n={1} on />
            <td colSpan={11} className="relative border border-[#1f7a4a] bg-[#c4c400] p-0 text-[7px] font-bold whitespace-pre outline-1 -outline-offset-2 outline-[#e8eca0]">
              تحليل ايرادات القاعة عن فبراير ٢٠٢١
              <span className="absolute -bottom-px -left-px size-[3px] bg-[#1f7a4a]" />
            </td>
            <Blank n={6} />
            <td colSpan={3} className="bg-[#ffff00] p-0 align-bottom text-[10px] leading-[14px] whitespace-pre underline">
              مقدمات في شهر يناير  ٢٠٢١
            </td>
          </tr>
          <tr className="h-[29px]">
            <RowNo n={2} />
            <td rowSpan={2} className={`${BOX} ${HEAD}`}>التاريخ</td>
            <td rowSpan={2} className={`${BOX} ${HEAD}`}>المبلغ</td>
            <td colSpan={3} className={`${BOX} ${HEAD}`}>ايرادات ديسمبر</td>
            <td colSpan={3} className={`${BOX} ${HEAD}`}>ايرادات محصلة مقدما</td>
            <td colSpan={3} className={`${BOX} ${HEAD}`}>ايرادات مستحقة</td>
            <Blank n={6} />
            <Blank n={3} cls="border-b border-l border-b-[#4a4a4a] border-l-[#e0e0e0] p-0" />
          </tr>
          <tr className="h-[22px]">
            <RowNo n={3} />
            {["المبلغ", "الاسم", "البيان", "المبلغ", "الاسم", "البيان", "المبلغ", "الاسم", "البيان"].map((t, i) => (
              <td key={i} className={`${BOX} ${HEAD}`}>{t}</td>
            ))}
            <Blank n={5} />
            <td className="border-b border-l border-b-[#e0e0e0] border-l-[#4a4a4a] p-0" />
            {["المبلغ", "الاسم", "البيان"].map((t) => (
              <td key={t} className={`${BOX} text-[8px] font-bold`}>{t}</td>
            ))}
          </tr>
          {ENTRIES.map((e) => {
            const dec = e.kind === "dec";
            return (
              <tr key={e.row} className={e.row === 7 ? "h-[21px]" : "h-[22px]"}>
                <RowNo n={e.row} />
                <td className={`${BOX} text-[6px] font-bold whitespace-pre`}>{e.date}</td>
                <td className={`${BOX} ${NUM}`}>{e.amount}</td>
                <td className={`${BOX} ${NUM}`}>{dec && e.amount}</td>
                <td className={`${BOX} ${TINY}`}>{dec && e.name}</td>
                <td className={`${BOX} ${NOTE}`}>{dec && e.note}</td>
                <td className={`${BOX} ${NUM}`}>{!dec && e.amount}</td>
                <td className={`${BOX} ${TINY}`}>{!dec && e.name}</td>
                <td className={`${BOX} ${NOTE}`}>{!dec && e.note}</td>
                <Blank n={3} cls={BOX} />
                <Blank n={5} />
                {e.row < 15 ? (
                  <td className="border-b border-l border-b-[#e0e0e0] border-l-[#4a4a4a] p-0" />
                ) : (
                  <td className={PLAIN} />
                )}
                {e.row < 14 && <Blank n={3} cls={BOX} />}
                {e.row === 14 && (
                  <>
                    <td className={`${BOX} font-['Liberation_Sans',sans-serif] text-[8px] font-bold`}>0</td>
                    <td colSpan={2} className={`${BOX} text-[7px] font-bold`}>الاجمالي</td>
                  </>
                )}
                {e.row > 14 && <Blank n={3} />}
              </tr>
            );
          })}
        </tbody>
      </table>
    </div>
  );
}

function ScrollBtn({ label, d, className }: { label: string; d: string; className: string }) {
  return (
    <button aria-label={label} className={`flex shrink-0 items-center justify-center border border-[#505050] bg-[#2e2e2e] ${className}`}>
      <Ic w={6} h={6}>
        <path d={d} fill="#f0f0f0" />
      </Ic>
    </button>
  );
}

const CHARTS = ["Chart15", "Chart16", "Chart17", "Chart18", "Chart19", "Chart20"];

function SheetTabs() {
  return (
    <div className="flex h-4 shrink-0 items-stretch text-[9px] text-[#d8d8d8]">
      <div className="flex w-[402px] items-center pl-[13px]">
        <ScrollBtn label="Scroll left" d="M4.200.800v4.400L1.500 3z" className="h-[11px] w-[11px]" />
        <div className="flex h-[11px] flex-1 justify-end bg-[#080808]">
          <div className="w-[60%] border border-[#505050] bg-[#3a3a3a]" />
        </div>
        <ScrollBtn label="Scroll right" d="M1.800.800v4.400L4.500 3z" className="h-[11px] w-[11px]" />
      </div>
      <div className="flex w-4 items-center justify-center">
        <Ic w={2} h={8}>
          <path d="M0 0h1.500v1.500H0zM0 3h1.500v1.500H0zM0 6h1.500v1.500H0z" fill="#e6e6e6" />
        </Ic>
      </div>
      <button aria-label="New sheet" className="flex w-[15px] items-center justify-center">
        <Ic w={11} h={11}>
          <circle cx="5.500" cy="5.500" r="4.900" stroke="#d0d0d0" strokeWidth="0.900" />
          <path d="M5.500 2.800v5.400M2.800 5.500h5.400" stroke="#e6e6e6" strokeWidth="1" />
        </Ic>
      </button>
      <div className="flex items-center pb-[2px] whitespace-nowrap">
        <button className="h-3 w-[50px] border-r border-[#5a5a5a] pr-[7px] text-right leading-3">... hart14</button>
        {CHARTS.map((c) => (
          <button key={c} className="h-3 w-[47px] border-r border-[#5a5a5a] leading-3">
            {c}
          </button>
        ))}
        <button className="h-3 w-[98px] leading-3">القاعة الأوبن فبراير ٢٠٢١</button>
        <button className="h-[14px] w-[106px] bg-white leading-[14px] whitespace-pre text-[#217346]">القاعة الكبيرة فبراير  ٢٠٢١</button>
      </div>
      <span className="flex-1" />
      <div className="flex items-center gap-2 pr-[13px]">
        <button aria-label="Previous sheets">
          <Ic w={6} h={6}>
            <path d="M4.200.800v4.400L1.500 3z" fill="#f0f0f0" />
          </Ic>
        </button>
        <button aria-label="Next sheets">
          <Ic w={6} h={6}>
            <path d="M1.800.800v4.400L4.500 3z" fill="#c0c0c0" />
          </Ic>
        </button>
      </div>
    </div>
  );
}

function StatusBar() {
  return (
    <footer className="flex h-[15px] shrink-0 items-center border-t border-[#3a3a3a] pl-[5px] text-[7px] text-[#dcdcdc]">
      <span className="w-[33px]">Ready</span>
      <button aria-label="Record macro" className="w-5">
        <Ic w={9} h={9}>
          <rect x="0.500" y="1.500" width="7.500" height="7" fill="#d0d0d0" />
          <path d="M.5 4h7.500M.5 6.300h7.500M3 3v5.500M5.500 3v5.500" stroke="#262626" strokeWidth="0.600" />
          <circle cx="7" cy="1.700" r="1.500" fill="#f0f0f0" />
        </Ic>
      </button>
      <button className="flex items-center gap-[2px]">
        <Ic w={11} h={10}>
          <path d="M4.500.8a4 4 0 0 0-1 7.600" stroke="#d0d0d0" strokeWidth="0.900" strokeDasharray="2 0.700" />
          <circle cx="6" cy="1.800" r="0.900" fill="#e6e6e6" />
          <path d="M3.500 3.500h5M6 3.500v2.300L4.500 8.300M6 5.500l1 1M6.500 6l3.500 3.500M10 6 6.500 9.500" stroke="#e6e6e6" strokeWidth="0.900" />
        </Ic>
        Accessibility: Investigate
      </button>
      <span className="flex-1" />
      <button aria-label="Normal view" className="flex h-full w-[27px] items-center justify-center bg-[#444444]">
        <Ic w={10} h={9}>
          <path d="M.5.500h9v8h-9zM.5 3.200h9M.5 5.800h9M3.500.5v8M6.500.5v8" stroke="#e0e0e0" strokeWidth="0.800" />
        </Ic>
      </button>
      <button aria-label="Page layout view" className="flex w-[27px] items-center justify-center">
        <Ic w={10} h={9}>
          <path d="M.5.500h9v8h-9zM2.500 2h5v5h-5zM3.500 3.500h3M3.500 5.200h3" stroke="#c8c8c8" strokeWidth="0.700" />
        </Ic>
      </button>
      <button aria-label="Page break preview" className="flex w-[27px] items-center justify-center">
        <Ic w={10} h={9}>
          <path d="M.5.500h9v8h-9z" stroke="#c8c8c8" strokeWidth="0.800" />
          <path d="M1 1h3.500v5H1zM6 1h3v5H6z" fill="#f0f0f0" />
        </Ic>
      </button>
      <button aria-label="Zoom out" className="ml-2 w-4">
        <Ic w={16} h={8}>
          <path d="M6 4h5" stroke="#d0d0d0" strokeWidth="0.900" />
        </Ic>
      </button>
      <input
        type="range"
        aria-label="Zoom"
        min={10}
        max={180}
        defaultValue={85}
        className="h-2 w-[68px] appearance-none bg-transparent bg-[linear-gradient(#8a8a8a,#8a8a8a)] bg-[length:100%_1px] bg-center bg-no-repeat [&::-webkit-slider-thumb]:h-2 [&::-webkit-slider-thumb]:w-[3px] [&::-webkit-slider-thumb]:appearance-none [&::-webkit-slider-thumb]:bg-white"
      />
      <button aria-label="Zoom in" className="w-[14px]">
        <Ic w={14} h={8}>
          <path d="M4 4h5M6.500 1.500v5" stroke="#d0d0d0" strokeWidth="0.900" />
        </Ic>
      </button>
      <span className="w-[24px] pr-[5px] text-right">85%</span>
    </footer>
  );
}

export default function App() {
  return (
    <div className="relative flex h-screen flex-col overflow-hidden bg-[#262626] font-[Roboto,'DejaVu_Sans',sans-serif] leading-none">
      <svg className="pointer-events-none absolute top-0 right-0" width="336" height="43" fill="none" stroke="#303030" strokeWidth="2" aria-hidden="true">
        <circle cx="9" cy="9.500" r="2" />
        <path d="M12 9.500h112" />
        <circle cx="127" cy="9.500" r="2" />
        <path d="M130 9.500h13l25 24h42l14-17h112" />
        <circle cx="53" cy="22.500" r="2" />
        <path d="M56 22.500h65l28 20" />
        <circle cx="145" cy="29.500" r="2" />
        <path d="M142 29.500H85l-16 12H2M148 29.500h6l20 13" />
        <circle cx="22" cy="27" r="11" strokeWidth="3" />
        <path d="m27 32-9-9M17 31v-9h9" strokeWidth="3" />
        <circle cx="191" cy="12" r="18" strokeWidth="3" />
        <path d="m286 43 42-43M298 43l38-38" />
      </svg>
      <div className="relative flex min-h-0 flex-1 flex-col">
        <TitleBar />
        <MenuTabs />
        <Ribbon />
        <QuickAccess />
        <LicenseBar />
        <FormulaBar />
        <main className="flex min-h-0 flex-1">
          <div className="flex w-[13px] shrink-0 flex-col px-px">
            <ScrollBtn label="Scroll up" d="M.8 4.200h4.400L3 1.500z" className="h-[11px] w-[11px]" />
            <div className="flex-1 bg-[#080808]">
              <div className="h-[39px] border border-[#505050] bg-[#333333]" />
            </div>
            <ScrollBtn label="Scroll down" d="M.8 1.800h4.400L3 4.500z" className="h-[11px] w-[11px]" />
          </div>
          <Sheet />
        </main>
        <SheetTabs />
        <StatusBar />
      </div>
    </div>
  );
}
